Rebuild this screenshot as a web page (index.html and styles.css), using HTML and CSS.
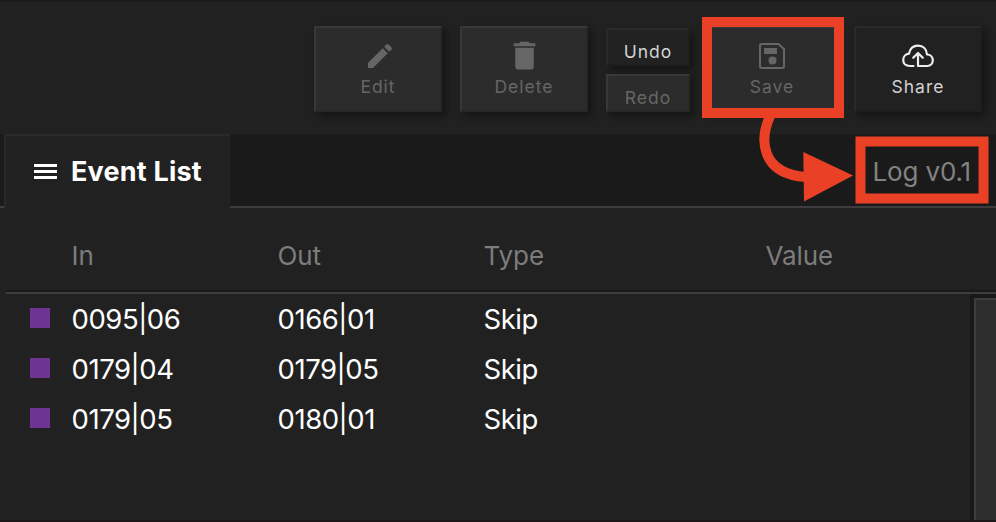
FILE: index.html
```html
<!DOCTYPE html>
<html lang="en">
<head>
<meta charset="utf-8">
<title>Event List</title>
<link rel="stylesheet" href="styles.css">
</head>
<body>
<main class="app">
  <header class="toolbar">
    <button class="btn disabled"><svg class="icon pencil" viewBox="0 0 24 24"><path d="M3 17.25V21h3.75L17.81 9.94l-3.75-3.75L3 17.25zM20.71 7.04a1 1 0 0 0 0-1.41l-2.34-2.34a1 1 0 0 0-1.41 0l-1.83 1.83 3.75 3.75 1.83-1.83z"/></svg><span>Edit</span></button>
    <button class="btn disabled"><svg class="icon trash" viewBox="0 0 24 24"><path d="M6 19.500a1.500 1.500 0 0 0 1.500 1.500h9a1.500 1.500 0 0 0 1.500-1.500V7H6v12.500zM19 4h-3.500l-1-1h-5l-1 1H5v2h14V4z"/></svg><span>Delete</span></button>
    <div class="history">
      <button class="btn small">Undo</button>
      <button class="btn small disabled">Redo</button>
    </div>
    <button class="btn disabled save"><svg class="icon" viewBox="0 0 32 32"><path fill="none" stroke="currentColor" stroke-width="2" stroke-linejoin="round" d="M6 4H22.500L28 9V26Q28 28 26 28H6Q4 28 4 26V6Q4 4 6 4"/><path d="M8 8h13v6H8z"/><circle cx="16.500" cy="20.500" r="4"/></svg><span>Save</span></button>
    <button class="btn"><svg class="icon cloud" viewBox="0 0 32 26"><path fill="none" stroke="currentColor" stroke-width="2.200" stroke-linecap="round" stroke-linejoin="round" d="M11.500 23H8C3.500 23 1.200 20.200 1.200 17C1.200 13.600 3.700 11 7 10.700C8 5.700 11.500 2.700 16 2.700C21 2.700 24.700 6 25 11.500C28.500 11.500 30.800 14 30.800 17.300C30.800 20.500 28.500 23 25.300 23H16V10.500M11.200 14.800L16 10L20.800 14.800"/></svg><span>Share</span></button>
  </header>
  <nav class="tabs">
    <div class="tab"><span class="menu"><i></i><i></i><i></i></span><span>Event List</span></div>
    <div class="version">Log v0.1</div>
  </nav>
  <section class="events">
    <div class="row head"><span></span><span>In</span><span>Out</span><span>Type</span><span>Value</span></div>
    <div class="body">
      <div class="list">
        <div class="row"><i class="swatch"></i><span>0095|06</span><span>0166|01</span><span>Skip</span></div>
        <div class="row"><i class="swatch"></i><span>0179|04</span><span>0179|05</span><span>Skip</span></div>
        <div class="row"><i class="swatch"></i><span>0179|05</span><span>0180|01</span><span>Skip</span></div>
      </div>
      <div class="scroll"><div class="thumb"></div></div>
    </div>
  </section>
  <svg class="callout" viewBox="0 0 996 522">
    <rect x="707" y="22" width="132" height="91"/>
    <rect x="860.500" y="141.500" width="123" height="57"/>
    <path d="M771 114C758 141 762 174 806 177"/>
    <polygon points="803.300,152 853,175.500 804,201.500"/>
  </svg>
</main>
</body>
</html>
```
FILE: styles.css
```css
* { box-sizing: border-box; }
body { margin: 0; background: #212121; }
.app {
  position: relative;
  width: 996px;
  height: 522px;
  overflow: hidden;
  display: flex;
  flex-direction: column;
  background: #212121;
  border-top: 2px solid #1a1a1a;
  border-bottom: 2px solid #1a1818;
  color: #fff;
  font: 27.5px Inter, "Liberation Sans", sans-serif;
}
.toolbar {
  flex: none;
  height: 132px;
  padding: 24px 14px 0 0;
  display: flex;
  justify-content: flex-end;
  gap: 18px;
}
.btn {
  display: flex;
  flex-direction: column;
  align-items: center;
  width: 128px;
  height: 86px;
  margin: 0;
  padding: 12px 0 0;
  border: 2px solid;
  border-color: #2a2a2a #1e1e1e #1e1e1e #2a2a2a;
  background: #212121;
  color: #d2d2d2;
  font: 17.5px/20px Inter, "Liberation Sans", sans-serif;
  letter-spacing: 1px;
  box-shadow: 4px 4px 8px rgba(0, 0, 0, .4);
}
.btn.disabled {
  background: #2c2c2c;
  border-color: #383838 #272727 #272727 #383838;
  color: #666;
}
.icon { display: block; flex: none; width: 32px; height: 32px; fill: currentColor; margin-bottom: 5px; }
.icon.pencil { margin-left: 3px; }
.icon.trash { width: 37px; height: 37px; margin: -3px 0 3px; }
.icon.cloud { color: #eee; height: 26px; margin: 3px 0 8px; }
.history { display: flex; flex-direction: column; gap: 8px; padding-top: 2px; }
.btn.small { width: 84px; height: 38px; padding-top: 12px; }
.tabs {
  flex: none;
  height: 74px;
  display: flex;
  justify-content: space-between;
  padding-left: 4px;
  background: linear-gradient(#3d3d3d, #3d3d3d) bottom / 100% 2px no-repeat, #1a1a1a;
}
.tab {
  width: 226px;
  display: flex;
  align-items: center;
  gap: 14px;
  padding: 0 0 2px 28px;
  border-top: 2px solid #2a2a2a;
  border-left: 2px solid #2a2a2a;
  background: #212121;
  font-weight: 700;
  font-size: 27px;
  letter-spacing: .2px;
  white-space: nowrap;
}
.menu { display: flex; flex-direction: column; gap: 3px; width: 23px; margin-top: 1px; }
.menu i { height: 3px; background: #fff; }
.version { padding-right: 25px; line-height: 75px; font-size: 26px; letter-spacing: -.15px; color: #828282; }
.events { flex: 1; display: flex; flex-direction: column; }
.row {
  display: grid;
  grid-template-columns: 41.5px 206px 206px 282px 1fr;
  align-items: center;
  height: 50px;
  padding-left: 24px;
  letter-spacing: -.45px;
  font-feature-settings: "calt" 0;
}
.row.head {
  height: 86px;
  margin-left: 6px;
  padding-top: 10px;
  border-bottom: 2px solid #3d3d3d;
  box-shadow: inset 0 -2px #191919;
  font-size: 26px;
  letter-spacing: -.1px;
  color: #7c7c7c;
}
.body { flex: 1; display: flex; }
.list { flex: 1; padding-left: 6px; }
.swatch { width: 20px; height: 20px; background: #6e3494; margin-top: -2px; }
.scroll { width: 26px; padding: 4px 0 0 4px; background: #191919; }
.thumb { height: 100%; background: #2e2e2e; border: 2px solid #3d3d3d; border-width: 2px 0 0 2px; }
.callout { position: absolute; left: 0; top: -2px; width: 996px; height: 522px; }
.callout rect, .callout path { fill: none; stroke: #ea4025; stroke-width: 10; }
.callout polygon { fill: #ea4025; }
```
